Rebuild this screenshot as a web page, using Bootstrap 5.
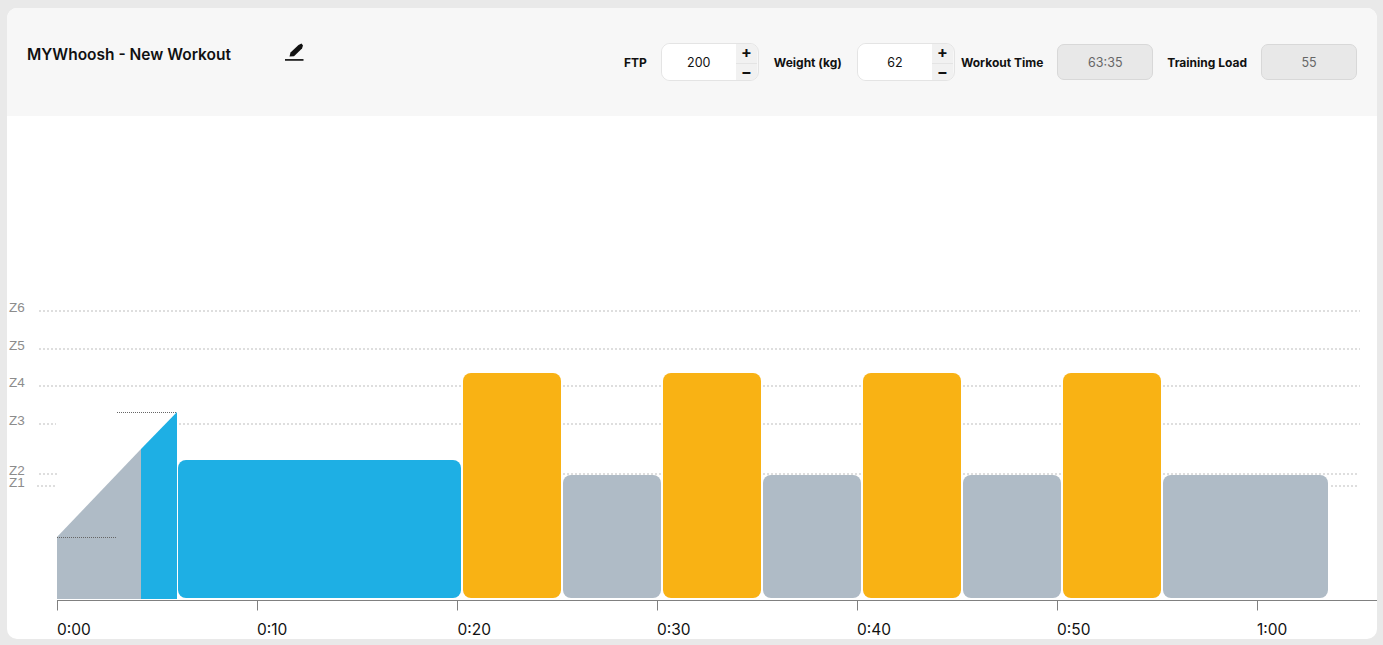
<!DOCTYPE html>
<html lang="en">
<head>
<meta charset="utf-8">
<title>MYWhoosh - New Workout</title>
<link href="https://cdn.jsdelivr.net/npm/bootstrap@5.3.0/dist/css/bootstrap.min.css" rel="stylesheet">
<style>
html, body { height: 100%; overflow: hidden; }
body { background: #e9e9e9; font-family: Inter, "Liberation Sans", sans-serif; color: #111; padding: 8px 6px 6px 7px; }
.wk-card { height: 631px; border: 0; border-radius: 10px; overflow: hidden; background: #fff; }
.wk-head { height: 108px; flex: none; background: #f7f7f7; border: 0; border-radius: 0 !important; padding: 35px 20px 0 20px; }
.wk-title { font-size: 15.5px; font-weight: 600; line-height: 24px; margin: 0; width: 258px; }
.wk-pencil { width: 20px; height: 20px; display: block; margin-top: -1px; }
.wk-label { font-size: 12px; font-weight: 700; margin-right: 14px; white-space: nowrap; line-height: 40px; }
.wk-label-wide { margin-right: 15px; }
.wk-stepper { width: 98px; height: 38px; flex-wrap: nowrap; border: 1px solid #e4e4e4; border-radius: 9px; overflow: hidden; }
.wk-stepper .form-control { width: 75px; flex: none; height: 36px; border: 0; border-radius: 0; padding: 0; text-align: center; font-size: 12.5px; color: #111; background: #fff; box-shadow: none; border-right: 1px solid #e4e4e4; }
.wk-steps { width: 21px; }
.wk-steps .btn { flex: 1; padding: 0; border: 0; border-radius: 0; background: #f1f1f1; color: #111; font-size: 16px; font-weight: 700; line-height: 1; }
.wk-steps .btn:first-child { padding-bottom: 3px; }
.wk-steps .btn + .btn { border-top: 1px solid #e4e4e4; }
.wk-readonly { width: 96px; height: 36px; margin-top: 1px; padding: 0; border: 1px solid #d8d8d8; border-radius: 7px; background: #e8e8e8; text-align: center; font-size: 12.5px; color: #666; box-shadow: none; }
.wk-gap-a { margin-right: 15px; }
.wk-gap-b { margin-right: 6px; }
.wk-gap-c { margin-right: 14px; }
.wk-chart { display: block; width: 1370px; height: 523px; flex: none; }
.wk-zone { font: 13.5px "Liberation Sans", sans-serif; fill: #8c8c8c; }
.wk-tick { font: 15.5px Inter, sans-serif; fill: #111; }
.wk-grid { stroke: #dedede; stroke-width: 2; stroke-dasharray: 2 2; fill: none; }
.wk-dots { stroke: #666; stroke-width: 1; stroke-dasharray: 1 1; fill: none; }
.wk-axis { stroke: #808080; stroke-width: 1; fill: none; }
.wk-gray { fill: #afbbc6; }
.wk-blue { fill: #1eafe4; }
.wk-gold { fill: #f9b214; }
</style>
</head>
<body>
<div class="card wk-card">
  <div class="card-header wk-head d-flex align-items-start">
    <h1 class="wk-title">MYWhoosh - New Workout</h1>
    <svg class="wk-pencil" viewBox="0 0 20 20" aria-label="Edit">
      <path fill="#111" d="M4.5 14.5 5.5 10.5 13.5 3 16.5 1.6 18 3.5 17 6.5 9 14.3Z"/>
      <rect x="0" y="17" width="18.5" height="1.8" fill="#222"/>
    </svg>
    <div class="d-flex align-items-start ms-auto">
      <label class="wk-label">FTP</label>
      <div class="input-group wk-stepper wk-gap-a">
        <input class="form-control" type="text" value="200" aria-label="FTP">
        <div class="wk-steps d-flex flex-column">
          <button class="btn" type="button">+</button>
          <button class="btn" type="button">−</button>
        </div>
      </div>
      <label class="wk-label wk-label-wide">Weight (kg)</label>
      <div class="input-group wk-stepper wk-gap-b">
        <input class="form-control" type="text" value="62" aria-label="Weight">
        <div class="wk-steps d-flex flex-column">
          <button class="btn" type="button">+</button>
          <button class="btn" type="button">−</button>
        </div>
      </div>
      <label class="wk-label">Workout Time</label>
      <input class="form-control wk-readonly wk-gap-c" type="text" value="63:35" readonly aria-label="Workout Time">
      <label class="wk-label">Training Load</label>
      <input class="form-control wk-readonly" type="text" value="55" readonly aria-label="Training Load">
    </div>
  </div>
  <svg class="wk-chart" viewBox="7 116 1370 523" xmlns="http://www.w3.org/2000/svg">
    <text class="wk-zone" x="9" y="312">Z6</text>
    <text class="wk-zone" x="9" y="350">Z5</text>
    <text class="wk-zone" x="9" y="387">Z4</text>
    <text class="wk-zone" x="9" y="425">Z3</text>
    <text class="wk-zone" x="9" y="475">Z2</text>
    <text class="wk-zone" x="9" y="487">Z1</text>

    <path class="wk-grid" d="M39 311H1360M39 349H1360M39 386H1360M39 424H56M179 424H1360M39 474H57M463 474H1358M37 486H57M1331 486H1358"/>

    <path class="wk-gray" d="M57 537 141 449V599H57Z"/>
    <path class="wk-blue" d="M141 449 177 412V599H141Z"/>

    <rect class="wk-blue" x="178" y="460" width="283" height="138" rx="8"/>
    <rect class="wk-gold" x="463" y="373" width="98" height="225" rx="8"/>
    <rect class="wk-gray" x="563" y="475" width="98" height="123" rx="8"/>
    <rect class="wk-gold" x="663" y="373" width="98" height="225" rx="8"/>
    <rect class="wk-gray" x="763" y="475" width="98" height="123" rx="8"/>
    <rect class="wk-gold" x="863" y="373" width="98" height="225" rx="8"/>
    <rect class="wk-gray" x="963" y="475" width="98" height="123" rx="8"/>
    <rect class="wk-gold" x="1063" y="373" width="98" height="225" rx="8"/>
    <rect class="wk-gray" x="1163" y="475" width="165" height="123" rx="8"/>

    <path class="wk-dots" d="M57 537.5H117M117 412.5H177"/>

    <path class="wk-axis" d="M57 600.5H1377M57.5 600V610.5M257.5 600V610.5M457.5 600V610.5M657.5 600V610.5M857.5 600V610.5M1057.5 600V610.5M1257.5 600V610.5"/>

    <text class="wk-tick" x="57" y="635">0:00</text>
    <text class="wk-tick" x="257" y="635">0:10</text>
    <text class="wk-tick" x="457.5" y="635">0:20</text>
    <text class="wk-tick" x="657" y="635">0:30</text>
    <text class="wk-tick" x="857" y="635">0:40</text>
    <text class="wk-tick" x="1057" y="635">0:50</text>
    <text class="wk-tick" x="1257" y="635">1:00</text>
  </svg>
</div>
<script src="https://cdn.jsdelivr.net/npm/bootstrap@5.3.0/dist/js/bootstrap.bundle.min.js"></script>
</body>
</html>
